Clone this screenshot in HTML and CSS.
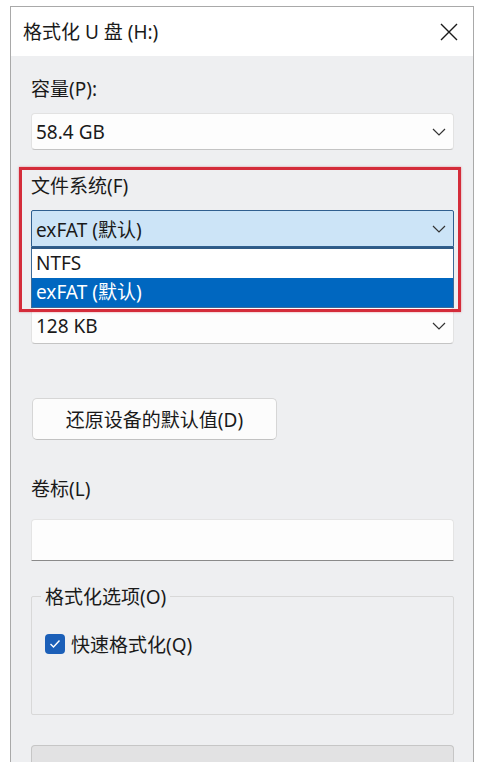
FILE: index.html
```html
<!DOCTYPE html>
<html lang="zh-CN">
<head>
<meta charset="utf-8">
<title>格式化 U 盘 (H:)</title>
<link rel="stylesheet" href="styles.css">
</head>
<body>
<div class="window">
  <div class="titlebar">
    <span class="title">格式化 U 盘 (H:)</span>
    <svg class="close" width="18" height="18" viewBox="0 0 18 18"><path d="M1 1 L17 17 M17 1 L1 17" stroke="#1a1a1a" stroke-width="1.4" fill="none"/></svg>
  </div>
  <div class="panel">
    <div class="field">
      <div class="label">容量(P):</div>
      <div class="select"><span>58.4 GB</span><svg class="chev" width="14" height="8" viewBox="0 0 14 8"><path d="M1 1 L7 7 L13 1" stroke="#333" stroke-width="1.2" fill="none"/></svg></div>
    </div>
    <div class="field fs">
      <div class="label">文件系统(F)</div>
      <div class="select open"><span>exFAT (默认)</span><svg class="chev" width="14" height="8" viewBox="0 0 14 8"><path d="M1 1 L7 7 L13 1" stroke="#333" stroke-width="1.2" fill="none"/></svg></div>
      <div class="list">
        <div class="opt">NTFS</div>
        <div class="opt sel">exFAT (默认)</div>
      </div>
      <div class="mark"></div>
    </div>
    <div class="field">
      <div class="label covered">分配单元大小(A)</div>
      <div class="select"><span>128 KB</span><svg class="chev" width="14" height="8" viewBox="0 0 14 8"><path d="M1 1 L7 7 L13 1" stroke="#333" stroke-width="1.2" fill="none"/></svg></div>
    </div>
    <div class="btn">还原设备的默认值(D)</div>
    <div class="label vol">卷标(L)</div>
    <div class="input"></div>
    <div class="group">
      <div class="legend">格式化选项(O)</div>
      <div class="check-row">
        <span class="checkbox"><svg width="12" height="10" viewBox="0 0 12 10"><path d="M1.5 5 L4.5 8 L10.5 1.5" stroke="#fff" stroke-width="1.4" fill="none"/></svg></span>
        <span>快速格式化(Q)</span>
      </div>
    </div>
    <div class="footer-btn"></div>
  </div>
</div>
</body>
</html>
```
FILE: styles.css
```css
html, body {
  margin: 0;
  padding: 0;
  background: #ffffff;
  height: 762px;
  overflow: hidden;
}
body {
  font-family: "Noto Sans", "Noto Sans CJK SC", sans-serif;
  color: #1a1a1a;
}
.window {
  margin: 6px 0 0 10px;
  width: 464px;
  box-sizing: border-box;
  border: 1px solid #a9a9a9;
  border-bottom: none;
  height: 760px;
  background: #eeeff1;
  display: flex;
  flex-direction: column;
}
.titlebar {
  height: 49px;
  background: #ffffff;
  display: flex;
  align-items: center;
  justify-content: space-between;
  padding: 0 15px 0 12px;
  flex-shrink: 0;
}
.title {
  font-size: 19px;
  line-height: 24px;
}
.close {
  display: block;
  margin-top: 1px;
}
.panel {
  padding: 21px 19px 0 20px;
  display: flex;
  flex-direction: column;
  flex: 1;
}
.field {
  display: flex;
  flex-direction: column;
  margin-bottom: 24px;
}
.label {
  font-size: 19px;
  line-height: 24px;
  margin-bottom: 12px;
  padding-left: 0;
}
.label.covered {
  visibility: hidden;
}
.select {
  height: 37px;
  box-sizing: border-box;
  background: #fdfdfd;
  border: 1px solid #e2e2e2;
  border-bottom-color: #c4c4c4;
  border-radius: 4px;
  display: flex;
  align-items: center;
  justify-content: space-between;
  padding: 0 7px 0 4px;
  font-size: 19px;
}
.select.open {
  background: #cce4f7;
  border-color: #2f5f8f;
  border-radius: 2px 2px 0 0;
}
.fs {
  position: relative;
}
.list {
  position: absolute;
  left: 0;
  right: 0;
  top: 100%;
  border: 1px solid #3d6b98;
  border-top: 2px solid #2f5a86;
  background: #ffffff;
  z-index: 2;
}
.opt {
  height: 29px;
  line-height: 29px;
  padding-left: 4px;
  font-size: 19px;
}
.opt.sel {
  background: #0067c0;
  color: #ffffff;
}
.mark {
  position: absolute;
  left: -12px;
  right: -7px;
  top: -7px;
  bottom: -65px;
  border: 3px solid #d42c3a;
  box-shadow: 0 0 2px rgba(212, 44, 58, 0.5);
  z-index: 3;
  pointer-events: none;
}
.btn {
  margin-top: 30px;
  margin-left: 1px;
  width: 245px;
  height: 42px;
  box-sizing: border-box;
  background: #fcfcfc;
  border: 1px solid #d6d6d6;
  border-bottom-color: #c2c2c2;
  border-radius: 5px;
  display: flex;
  align-items: center;
  justify-content: center;
  font-size: 19px;
}
.label.vol {
  margin-top: 37px;
  margin-bottom: 18px;
}
.input {
  height: 42px;
  box-sizing: border-box;
  background: #fdfdfd;
  border: 1px solid #e4e4e4;
  border-bottom: 1px solid #8a8a8a;
  border-radius: 4px 4px 0 0;
}
.group {
  margin-top: 35px;
  height: 119px;
  box-sizing: border-box;
  border: 1px solid #d8d8d8;
  border-radius: 2px;
  position: relative;
  padding: 24px 0 0 13px;
}
.legend {
  position: absolute;
  top: -12px;
  left: 9px;
  padding: 0 4px;
  background: #eeeff1;
  font-size: 19px;
  line-height: 24px;
}
.check-row {
  display: flex;
  align-items: center;
  gap: 6px;
  font-size: 19px;
  margin-top: 9px;
}
.checkbox {
  width: 20px;
  height: 20px;
  border-radius: 4px;
  background: #1b5fb8;
  display: flex;
  align-items: center;
  justify-content: center;
}
.footer-btn {
  margin-top: 30px;
  flex: 1;
  background: #e2e2e3;
  border: 1px solid #c6c6c6;
  border-bottom: none;
  border-radius: 4px 4px 0 0;
}
```
